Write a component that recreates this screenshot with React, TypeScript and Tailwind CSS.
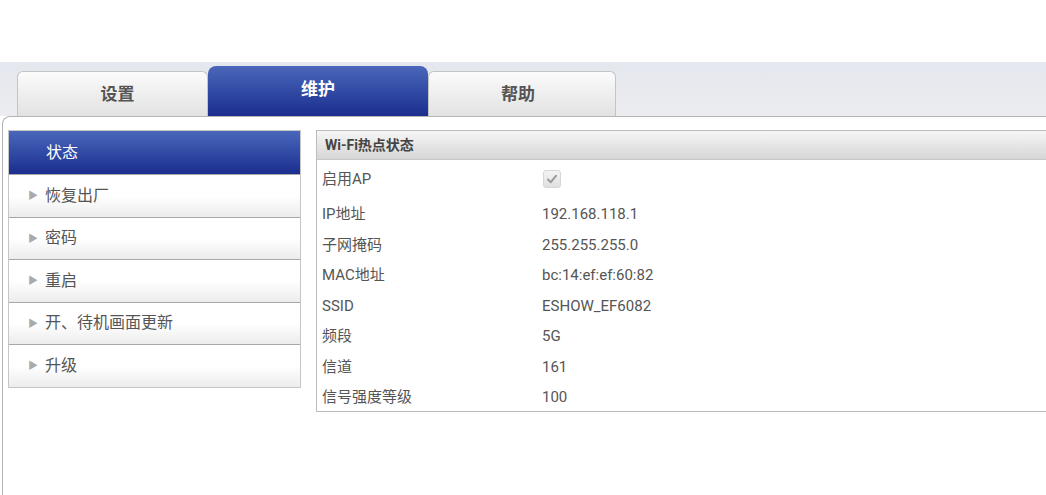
import React from "react";

const rows: { label: string; value?: string; check?: boolean }[] = [
  { label: "启用AP", check: true },
  { label: "IP地址", value: "192.168.118.1" },
  { label: "子网掩码", value: "255.255.255.0" },
  { label: "MAC地址", value: "bc:14:ef:ef:60:82" },
  { label: "SSID", value: "ESHOW_EF6082" },
  { label: "频段", value: "5G" },
  { label: "信道", value: "161" },
  { label: "信号强度等级", value: "100" },
];

const menu = ["恢复出厂", "密码", "重启", "开、待机画面更新", "升级"];

export default function App() {
  return (
    <div
      className="w-[1046px] h-[495px] overflow-hidden bg-white"
      style={{ fontFamily: 'Roboto, "Noto Sans CJK SC", sans-serif' }}
    >
      <div className="h-[62px] bg-white" />
      {/* tab band */}
      <div className="h-[54px] bg-gradient-to-b from-[#e4e7ee] to-[#ecedf0] flex items-end pl-[17px]">
        <div className="w-[191px] h-[45px] rounded-t-[6px] border border-b-0 border-[#c4c4c4] bg-gradient-to-b from-[#fbfbfb] to-[#e2e2e2] flex items-center justify-center pl-[10px] pt-[2px] text-[17px] font-bold text-[#555]">
          设置
        </div>
        <div className="w-[220px] h-[50px] rounded-t-[8px] bg-gradient-to-b from-[#4a67bb] to-[#1c2d8e] flex items-start justify-center pt-[11px] text-[17px] font-bold text-white">
          维护
        </div>
        <div className="w-[188px] h-[45px] rounded-t-[6px] border border-b-0 border-[#c4c4c4] bg-gradient-to-b from-[#fbfbfb] to-[#e2e2e2] flex items-center justify-center pr-[8px] pt-[2px] text-[17px] font-bold text-[#555]">
          帮助
        </div>
      </div>
      {/* content */}
      <div className="ml-[2px] border-t border-l border-[#b4b4b4] rounded-tl-[8px] h-[379px] pt-[13px] pl-[5px] flex items-start gap-[15px]">
        <div className="w-[293px] border border-[#c6c6c6] shrink-0">
          <div className="h-[43px] bg-gradient-to-b from-[#4a67bb] to-[#1c2d8e] flex items-center pl-[37px] text-[16px] text-white">
            状态
          </div>
          {menu.map((m) => (
            <div
              key={m}
              className="h-[42.5px] border-t border-[#a8a8a8] bg-gradient-to-b from-white via-white to-[#ececec] flex items-center pl-[19px] text-[16px] text-[#555]"
            >
              <span className="text-[10px] text-[#aaa] mr-[7px]">▶</span>
              {m}
            </div>
          ))}
        </div>
        <div className="flex-1 border border-r-0 border-[#bcbcbc]">
          <div className="h-[29px] border-b border-[#c8c8c8] bg-gradient-to-b from-[#f6f6f6] to-[#d6d6d6] flex items-center pl-[8px] text-[14px] font-bold text-[#444]">
            Wi-Fi热点状态
          </div>
          <div>
            {rows.map((r, i) => (
              <div
                key={r.label}
                className={`flex items-center text-[15px] text-[#555] ${i === 0 ? "h-[37px] pt-[1px]" : "h-[30.5px] pt-[4px]"}`}
              >
                <div className="w-[225px] pl-[5px] shrink-0">{r.label}</div>
                {r.check ? (
                  <div className="w-[18px] h-[18px] ml-[1px] rounded-[3px] border border-[#d6d6d6] bg-gradient-to-b from-[#f4f4f4] to-[#e0e0e0] flex items-center justify-center">
                    <svg width="12" height="12" viewBox="0 0 12 12">
                      <path d="M2 6.5 L4.8 9.2 L10 2.8" fill="none" stroke="#9a9a9a" strokeWidth="2" strokeLinecap="round" strokeLinejoin="round" />
                    </svg>
                  </div>
                ) : (
                  <div>{r.value}</div>
                )}
              </div>
            ))}
          </div>
        </div>
      </div>
    </div>
  );
}
